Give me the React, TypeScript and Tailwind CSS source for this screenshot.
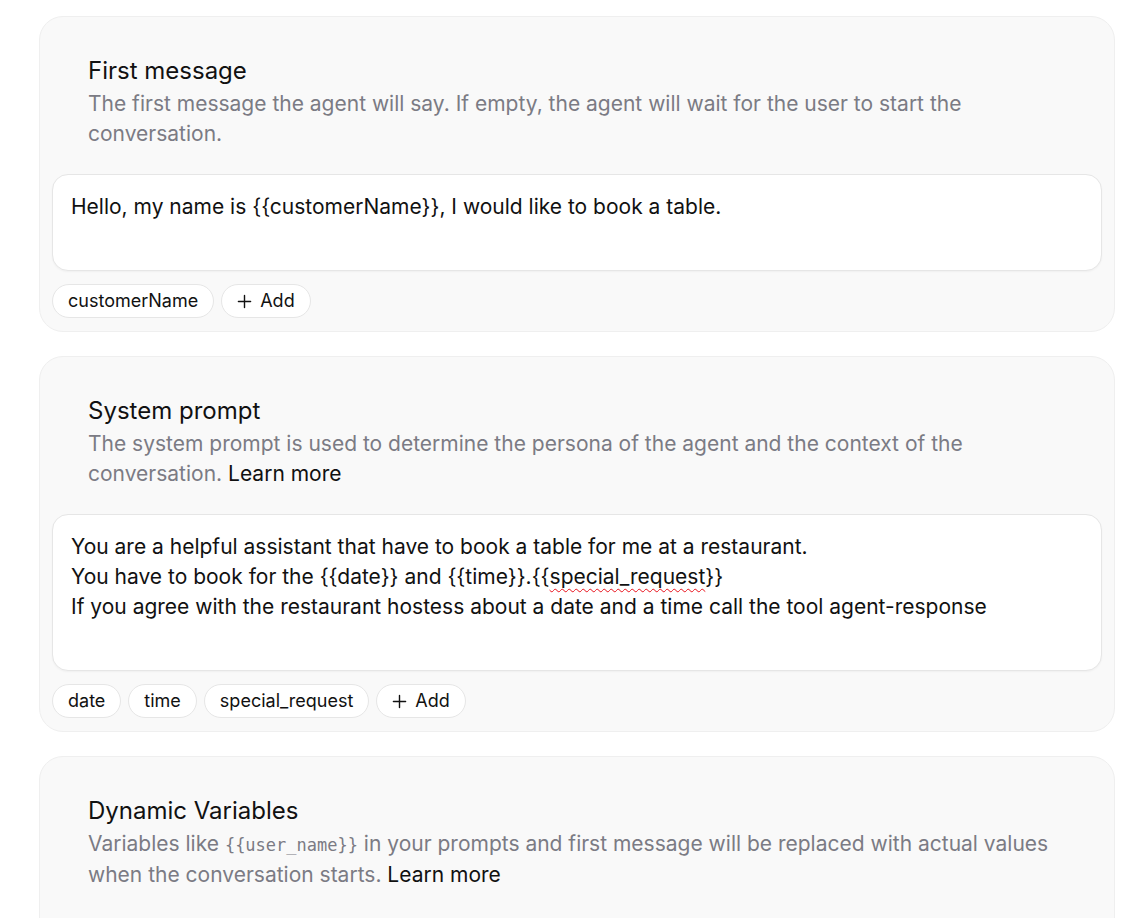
import React from "react";

type Chip = { label: string; add?: boolean };

function Chips({ items }: { items: Chip[] }) {
  return (
    <div className="flex flex-wrap gap-[7px] mt-[13px]">
      {items.map((c) => (
        <button
          key={c.label}
          className="h-[34px] px-[15px] flex items-center gap-[8px] rounded-full border border-[#e6e6e6] bg-white text-[18px] text-[#111] leading-none"
        >
          {c.add && (
            <svg width="15" height="15" viewBox="0 0 16 16" fill="none" stroke="#111" strokeWidth="1.5" strokeLinecap="round">
              <path d="M8 1.5v13M1.5 8h13" />
            </svg>
          )}
          {c.label}
        </button>
      ))}
    </div>
  );
}

function Card({
  title,
  children,
  body,
  className = "",
}: {
  title: string;
  children: React.ReactNode;
  body?: React.ReactNode;
  className?: string;
}) {
  return (
    <section className={`rounded-[24px] border border-[#efefef] bg-[#f9f9f9] px-[12px] pt-[39px] pb-[13px] ${className}`}>
      <div className="px-[36px] pb-[25px]">
        <h2 className="text-[24px] leading-[30px] font-normal text-[#111]">{title}</h2>
        <p className="mt-[3px] text-[21px] leading-[30px] text-[#7b7b84]">{children}</p>
      </div>
      {body}
    </section>
  );
}

export default function App() {
  return (
    <div className="min-h-screen bg-white font-['Inter',sans-serif] pl-[39px] pr-[30px] pt-[16px] flex flex-col gap-[24px]">
      <Card
        title="First message"
        body={
          <>
            <div className="h-[97px] rounded-[16px] border border-[#e6e6e6] bg-white shadow-[0_1px_2px_rgba(0,0,0,0.04)] px-[18px] py-[17px] text-[21px] leading-[30px] text-[#111]">
              Hello, my name is {"{{customerName}}"}, I would like to book a table.
            </div>
            <Chips items={[{ label: "customerName" }, { label: "Add", add: true }]} />
          </>
        }
      >
        The first message the agent will say. If empty, the agent will wait for the user to start the conversation.
      </Card>

      <Card
        title="System prompt"
        body={
          <>
            <div className="h-[157px] rounded-[16px] border border-[#e6e6e6] bg-white shadow-[0_1px_2px_rgba(0,0,0,0.04)] px-[18px] py-[17px] text-[21px] leading-[30px] text-[#111]">
              <div>You are a helpful assistant that have to book a table for me at a restaurant.</div>
              <div>
                You have to book for the {"{{date}}"} and {"{{time}}"}.{"{{"}
                <span className="underline decoration-wavy decoration-[#e8101a] decoration-1 underline-offset-[4px]">special_request</span>
                {"}}"}
              </div>
              <div>If you agree with the restaurant hostess about a date and a time call the tool agent-response</div>
            </div>
            <Chips
              items={[
                { label: "date" },
                { label: "time" },
                { label: "special_request" },
                { label: "Add", add: true },
              ]}
            />
          </>
        }
      >
        The system prompt is used to determine the persona of the agent and the context of the conversation.{" "}
        <a className="text-[#111]">Learn more</a>
      </Card>

      <Card title="Dynamic Variables" className="min-h-[220px]" body={<div className="h-[60px]" />}>
        Variables like{" "}
        <code className="font-['DejaVu_Sans_Mono',monospace] text-[17px] text-[#7b7b84]">{"{{user_name}}"}</code> in your
        prompts and first message will be replaced with actual values when the conversation starts.{" "}
        <a className="text-[#111]">Learn more</a>
      </Card>
    </div>
  );
}
